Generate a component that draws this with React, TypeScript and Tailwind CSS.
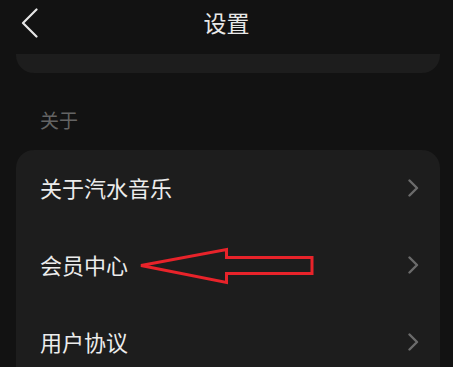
const ROWS = ['关于汽水音乐', '会员中心', '用户协议'];

function RedArrow() {
  // annotation drawn over the "会员中心" row
  return (
    <svg className="absolute left-0 top-0 pointer-events-none" width="453" height="367" viewBox="0 0 453 367">
      <polygon
        points="141,265.5 226.5,249.5 226.5,257.5 312,257.5 312,273.5 226.5,273.5 226.5,282.5"
        fill="none"
        stroke="#e8232a"
        strokeWidth="3"
        strokeLinejoin="miter"
      />
    </svg>
  );
}

function Chevron() {
  return (
    <svg width="12" height="18" viewBox="0 0 12 18">
      <path d="M2.5 1.5 L10 9 L2.5 16.5" fill="none" stroke="#6b6b6b" strokeWidth="2.4" strokeLinecap="round" strokeLinejoin="round" />
    </svg>
  );
}

export default function App() {
  return (
    <div
      className="relative w-[453px] h-[367px] overflow-hidden bg-[#121212]"
      style={{ fontFamily: '"Noto Sans CJK SC", "Noto Sans", sans-serif' }}
    >
      <header className="relative flex items-center justify-center h-[54px]">
        <svg className="absolute left-[20px] top-[8px]" width="20" height="30" viewBox="0 0 20 30">
          <path d="M16.5 1.5 L3 15 L16.5 28.5" fill="none" stroke="#e6e6e6" strokeWidth="2.2" strokeLinecap="round" strokeLinejoin="round" />
        </svg>
        <h1 className="text-[23px] leading-none text-[#e8e8e8] -mt-[9px]">设置</h1>
      </header>

      <div className="ml-[16px] mr-[13px] h-[19px] rounded-b-[18px] bg-[#1d1d1d]" />

      <div className="mt-[35px] pl-[40px] text-[19px] leading-[24px] text-[#646464]">关于</div>

      <div className="mt-[18px] ml-[16px] mr-[13px] rounded-t-[18px] bg-[#1d1d1d]">
        {ROWS.map((label) => (
          <div key={label} className="flex items-center justify-between h-[77px] pl-[24px] pr-[21px]">
            <span className="text-[22px] leading-none text-[#ececec] -mt-[3px]">{label}</span>
            <span className="-mt-[2px]">
              <Chevron />
            </span>
          </div>
        ))}
      </div>

      <RedArrow />
    </div>
  );
}
